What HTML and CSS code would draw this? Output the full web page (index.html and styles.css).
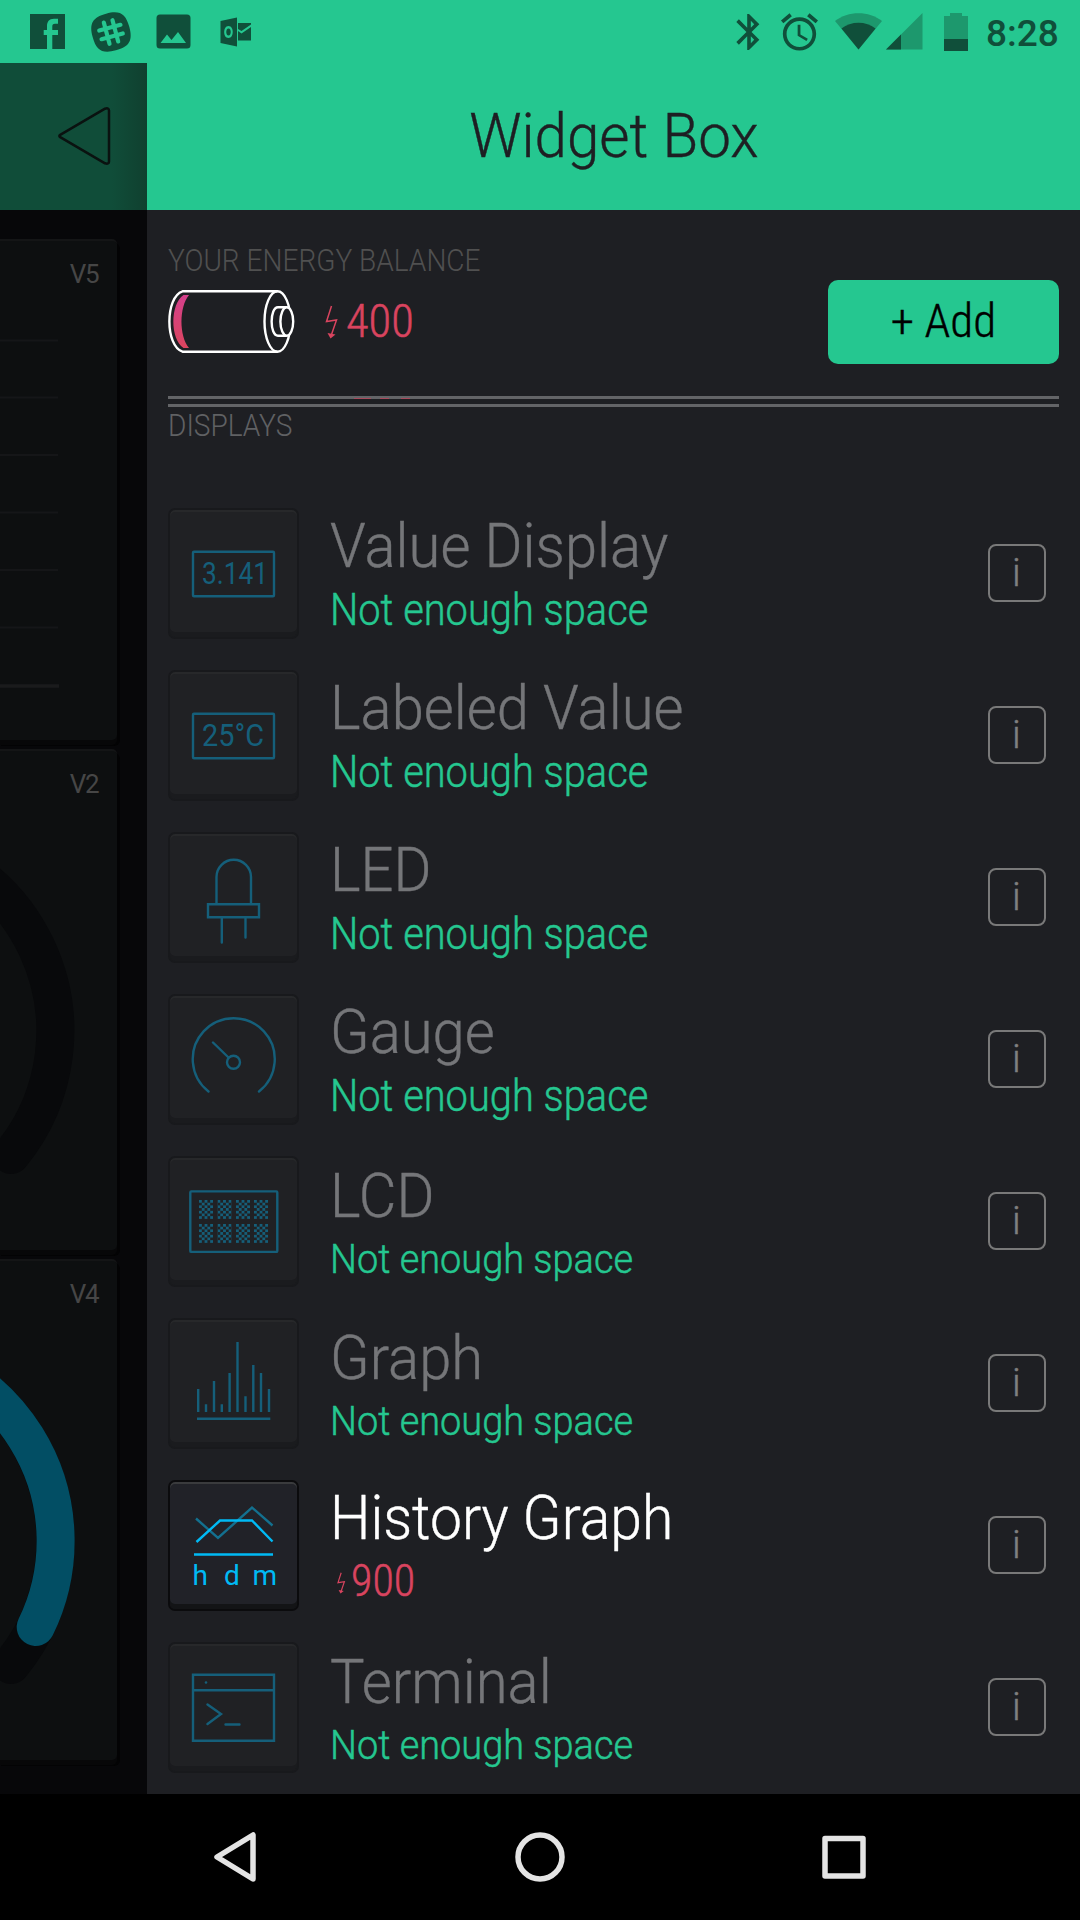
FILE: index.html
```html
<!DOCTYPE html>
<html lang="en">
<head>
<meta charset="utf-8">
<title>Widget Box</title>
<link rel="stylesheet" href="styles.css">
</head>
<body>
<div class="screen">
  <header class="status">
    <div class="status-left">
      <svg width="35" height="35" viewBox="0 0 35 35"><path fill="currentColor" fill-rule="evenodd" d="M0 0H35V35H22.300V21H28V16H22.300V12.500C22.300 10.500 23 9.700 25 9.700H28V4.800H24C19 4.800 17 8 17 12V16H13.700V21H17V35H0Z"/></svg>
      <svg width="42" height="42" viewBox="0 0 42 42"><g transform="rotate(-15 21 21)"><path fill="currentColor" d="M21 2C35 2 40 7 40 21S35 40 21 40 2 35 2 21 7 2 21 2Z"/><path class="cut" d="M16.500 10V32M25.500 10V32M10 16.500H32M10 25.500H32"/></g></svg>
      <svg width="35" height="35" viewBox="0 0 35 35"><path fill="currentColor" fill-rule="evenodd" d="M4 .5H31Q34.500 .5 34.500 4V31Q34.500 34.500 31 34.500H4Q.5 34.500 .5 31V4Q.5 .5 4 .5ZM4.500 29H30L22 18 15.500 26 11 20.500Z"/></svg>
      <svg width="32" height="30" viewBox="0 0 32 30"><path fill="currentColor" fill-rule="evenodd" d="M.5 4 17 .5V29.500L.5 26ZM8.500 9C2.800 9 2.800 21 8.500 21S14.200 9 8.500 9ZM8.500 11.500C11.500 11.500 11.500 18.500 8.500 18.500S5.500 11.500 8.500 11.500Z"/><path fill="currentColor" d="M18 6H31V7.500L21.500 14 18 12ZM18 14 21.500 16.500 31 10V23.500H18Z"/></svg>
    </div>
    <div class="status-right">
      <svg class="bt" width="24" height="38" viewBox="5.500 1.500 13 21"><path fill="currentColor" d="M17.710 7.710L12 2h-1v7.590L6.410 5 5 6.410 10.590 12 5 17.590 6.410 19 11 14.410V22h1l5.710-5.710-4.300-4.290 4.300-4.290zM13 5.830l1.880 1.880L13 9.590V5.830zm1.880 10.460L13 18.170v-3.760l1.880 1.880z"/></svg>
      <svg class="alarm" width="37" height="38" viewBox="2 1.700 20 20.500"><path fill="currentColor" d="M22 5.720l-4.600-3.860-1.290 1.530 4.600 3.860L22 5.720zM7.880 3.390L6.600 1.860 2 5.710l1.290 1.530 4.590-3.850zM12.500 8H11v6l4.750 2.850.75-1.230-4-2.370V8zM12 4c-4.970 0-9 4.030-9 9s4.020 9 9 9c4.970 0 9-4.030 9-9s-4.030-9-9-9zm0 16c-3.870 0-7-3.130-7-7s3.130-7 7-7 7 3.130 7 7-3.130 7-7 7z"/></svg>
      <svg class="wifi" width="47" height="37" viewBox="0 0 47 37"><path class="faint" d="M23.500 36.500 0 8C13-2.500 34-2.500 47 8Z"/><path fill="currentColor" d="M23.500 36.500 6.500 15.500C16 7.700 31 7.700 40.500 15.500Z"/></svg>
      <svg class="cell" width="37" height="37" viewBox="0 0 37 37"><path class="faint" d="M0 36.500H36.500V0Z"/><path fill="currentColor" d="M0 36.500H15V21.500Z"/></svg>
      <svg class="batt" width="24" height="38" viewBox="0 0 24 38"><path class="faint" d="M0 3H6V0H18V3H24V26H0Z"/><path fill="currentColor" d="M0 26H24V38H0Z"/></svg>
      <span class="clock">8:28</span>
    </div>
  </header>

  <main class="content">
    <aside class="project">
      <div class="project-bar">
        <svg width="54" height="60" viewBox="0 0 54 60"><path fill="none" stroke="#0a1210" stroke-width="2.500" stroke-linejoin="round" d="M3.200 28.800Q1.500 30 3.200 31.200L48 57.300Q52 58.500 52 55.500V4.500Q52 1.500 48 2.700Z"/></svg>
      </div>
      <div class="cards">
        <section class="card">
          <span class="pin">V5</span>
          <svg class="card-art" width="117" height="501" viewBox="0 0 117 501"><path stroke="#151618" stroke-width="2" d="M0 101.500H58M0 158.500H58M0 216H58M0 273.500H58M0 331H58M0 388.500H58"/><path stroke="#1a1b1c" stroke-width="3.500" d="M0 447H59"/></svg>
        </section>
        <section class="card">
          <span class="pin">V2</span>
          <svg class="card-art" width="117" height="501" viewBox="0 0 117 501"><path class="dial" d="M-139.600 86.400A195.600 195.600 0 0 1 11 406"/></svg>
        </section>
        <section class="card">
          <span class="pin">V4</span>
          <svg class="card-art" width="117" height="501" viewBox="0 0 117 501"><path class="dial" d="M-139.600 86.400A195.600 195.600 0 0 1 11 406"/><path class="dial dial-on" d="M-139.600 86.400A195.600 195.600 0 0 1 35.700 368"/></svg>
        </section>
      </div>
    </aside>

    <section class="drawer">
      <h1 class="title"><span>Widget Box</span></h1>
      <div class="drawer-body">
        <div class="label energy-label">YOUR ENERGY BALANCE</div>
        <div class="energy">
          <svg class="battery" width="127" height="63" viewBox="0 0 127 63">
            <defs><linearGradient id="charge" x1="0" y1="0" x2="0" y2="1"><stop offset="0" stop-color="#d4408c"/><stop offset="1" stop-color="#dc455e"/></linearGradient></defs>
            <path fill="url(#charge)" d="M21 5H15.500C2 14 2 49 15.500 58H21C11 46 11 17 21 5Z"/>
            <g fill="none" stroke="#fff" stroke-width="2.400"><path d="M109.500 1.300H14.500C-3 7-3 56 14.500 61.700H109.500"/><ellipse cx="109.500" cy="31.500" rx="13" ry="30.200"/><path fill="#1e1f23" d="M118.500 17.300H110C101.500 17.300 101.500 45.700 110 45.700H118.500"/><ellipse fill="#1e1f23" cx="118.800" cy="31.500" rx="6.400" ry="14.200"/></g>
          </svg>
          <svg class="bolt" width="14" height="34" viewBox="0 0 14 34"><path fill="none" stroke="currentColor" stroke-width="1.500" d="M6.500 1 1.500 16.500 11.500 15 6 31"/><path fill="currentColor" d="M2.500 28 5.500 33.500 10.500 29.500Z"/></svg>
          <span class="balance">400</span>
          <button class="add" type="button">+ Add</button>
        </div>
        <div class="rules"><i class="peek peek-a"></i><i class="peek peek-b"></i><i class="peek peek-c"></i></div>
        <div class="label section-label">DISPLAYS</div>

        <ul class="list">
          <li class="row">
            <div class="tile"><svg viewBox="0 0 130 130"><rect x="25" y="43.800" width="81" height="44.500" rx="1"/><text x="34" y="75.500" textLength="66" lengthAdjust="spacingAndGlyphs">3.141</text></svg></div>
            <div class="text"><div class="name">Value Display</div><div class="note">Not enough space</div></div>
            <div class="info">i</div>
          </li>
          <li class="row">
            <div class="tile"><svg viewBox="0 0 130 130"><rect x="25" y="43.800" width="81" height="44.500" rx="1"/><text x="34" y="75.500" textLength="62" lengthAdjust="spacingAndGlyphs">25°C</text></svg></div>
            <div class="text"><div class="name">Labeled Value</div><div class="note">Not enough space</div></div>
            <div class="info">i</div>
          </li>
          <li class="row">
            <div class="tile"><svg viewBox="0 0 130 130"><path d="M48.500 72V45A17.250 17.250 0 0 1 83 45V72M40 72.300H91V85.300H40ZM53.800 85.500V110.500M77.500 85.500V105.500"/></svg></div>
            <div class="text"><div class="name">LED</div><div class="note">Not enough space</div></div>
            <div class="info">i</div>
          </li>
          <li class="row">
            <div class="tile"><svg viewBox="0 0 130 130"><path d="M40.500 97.500A41 41 0 1 1 91 97.500M45 48.500 60.500 63.500"/><circle cx="65.500" cy="68.300" r="6.500"/></svg></div>
            <div class="text"><div class="name">Gauge</div><div class="note">Not enough space</div></div>
            <div class="info">i</div>
          </li>
          <li class="row odd">
            <div class="tile"><svg viewBox="0 0 130 130">
              <defs><pattern id="dots" width="5.600" height="5.400" patternUnits="userSpaceOnUse"><path class="solid" d="M0 0H2.800V2.700H0ZM2.800 2.700H5.600V5.400H2.800Z"/></pattern><rect id="cell" class="dots" width="14" height="18.900"/></defs>
              <rect x="22.300" y="35.400" width="87" height="60.500" rx="1"/>
              <use href="#cell" x="31" y="44"/><use href="#cell" x="49.500" y="44"/><use href="#cell" x="68" y="44"/><use href="#cell" x="86" y="44"/>
              <use href="#cell" x="31" y="68"/><use href="#cell" x="49.500" y="68"/><use href="#cell" x="68" y="68"/><use href="#cell" x="86" y="68"/>
            </svg></div>
            <div class="text"><div class="name">LCD</div><div class="note">Not enough space</div></div>
            <div class="info">i</div>
          </li>
          <li class="row odd">
            <div class="tile"><svg viewBox="0 0 130 130"><path class="butt" d="M30.200 94V71M38 94V86.300M46 94V63M53.800 94V86.300M61.600 94V55M69.500 94V24M77.500 94V78.300M85.300 94V47M93 94V55M101 94V71M29 100.800H102.300"/></svg></div>
            <div class="text"><div class="name">Graph</div><div class="note">Not enough space</div></div>
            <div class="info">i</div>
          </li>
          <li class="row active">
            <div class="tile"><svg viewBox="0 0 130 130"><path stroke="#13708f" d="M28 38.500 50 58 84 27.500 104.500 45.500"/><path d="M28.500 62 52 40.500H84L104.500 61.500M26 74.500H105"/><text class="units" x="24.500 56 84.500" y="105">hdm</text></svg></div>
            <div class="text"><div class="name">History Graph</div><div class="price"><svg width="9" height="22" viewBox="0 0 14 34"><path fill="none" stroke="currentColor" stroke-width="1.800" d="M6.500 1 1.500 16.500 11.500 15 6 31"/><path fill="currentColor" d="M2.500 28 5.500 33.500 10.500 29.500Z"/></svg><span>900</span></div></div>
            <div class="info">i</div>
          </li>
          <li class="row odd">
            <div class="tile"><svg viewBox="0 0 130 130"><path d="M25 32.700H106V98.800H25ZM25 48.300H106M39.500 62.500 53 72 39.500 82M57.500 82.500H71.500"/><circle class="solid" cx="38" cy="40.500" r="1.300"/></svg></div>
            <div class="text"><div class="name">Terminal</div><div class="note">Not enough space</div></div>
            <div class="info">i</div>
          </li>
        </ul>
      </div>
    </section>
  </main>

  <nav class="nav">
    <svg width="50" height="56" viewBox="0 0 50 56"><path d="M6 28 42 6V50Z"/></svg>
    <svg width="56" height="56" viewBox="0 0 56 56"><circle cx="28" cy="28" r="22"/></svg>
    <svg width="50" height="56" viewBox="0 0 50 56"><rect x="6" y="9.500" width="38" height="37.500"/></svg>
  </nav>
</div>
</body>
</html>
```

FILE: styles.css
```css
* { box-sizing: border-box; }
body { margin: 0; background: #000; font-family: Roboto, "Liberation Sans", sans-serif; font-weight: 300; }
svg { display: block; flex: none; overflow: visible; }
.screen { width: 1080px; height: 1920px; display: flex; flex-direction: column; overflow: hidden; }

/* Status bar */
.status { height: 63px; background: #25c790; color: #104f3a; display: flex; justify-content: space-between; align-items: center; padding: 0 21px 0 30px; }
.status-left, .status-right { display: flex; align-items: center; }
.status-left svg:nth-child(2) { margin-left: 25px; }
.status-left svg:nth-child(3) { margin-left: 24px; }
.status-left svg:nth-child(4) { margin-left: 29px; }
.cut { fill: none; stroke: #25c790; stroke-width: 4.2; stroke-linecap: round; }
.faint { fill: #1d986d; }
.alarm { margin-left: 20px; }
.wifi { margin-left: 17px; }
.cell { margin-left: 4px; }
.batt { margin-left: 21px; }
.clock { margin-left: 18px; font-size: 37px; font-weight: 500; line-height: 63px; padding-top: 3px; width: 73px; white-space: nowrap; }

.content { height: 1731px; display: flex; }

/* Project screen left visible beside the drawer */
.project { width: 147px; background: #070709; overflow: hidden; }
.project-bar { height: 147px; padding: 43px 0 0 57px; background: linear-gradient(90deg, #104d39 0 112px, #10402f 147px); }
.cards { padding-top: 29px; display: flex; flex-direction: column; gap: 9px; }
.card { position: relative; width: 117px; height: 501px; background: #0d0f10; border-top: 2px solid #141516; border-radius: 0 5px 5px 0; box-shadow: 0 5px 0 #070708, 2px 5px 0 1px #030304; }
.pin { display: block; padding: 18px 19px 0 0; text-align: right; font-size: 26px; font-weight: 400; line-height: 30px; letter-spacing: -1.5px; color: #464646; }
.card-art { position: absolute; left: 0; top: -2px; overflow: hidden; }
.dial { fill: none; stroke: #08090b; stroke-width: 38; stroke-linecap: round; }
.dial-on { stroke: #024e64; }

/* Drawer */
.drawer { width: 933px; background: #1e1f23; }
.title { margin: 0; height: 147px; line-height: 145px; background: #25c790; color: #1e1f23; font-size: 62px; font-weight: 300; text-align: center; }
.title span { display: inline-block; transform: scaleX(.94); -webkit-text-stroke: .4px currentColor; }
.drawer-body { padding: 35px 21px 0; }
.label { font-size: 30.5px; line-height: 31px; height: 31px; white-space: nowrap; transform: scaleX(.92); transform-origin: left; }
.energy-label { color: #505050; }
.energy { height: 84px; margin-top: 4px; display: flex; align-items: center; color: #d9445f; }
.battery { margin-top: -1px; }
.bolt { margin-left: 30px; }
.balance { margin-left: 7px; margin-top: -2px; font-size: 46.5px; font-stretch: 75%; -webkit-text-stroke: .5px currentColor; }
.add { margin-left: auto; width: 231px; height: 84px; border: 0; border-radius: 10px; background: #25c790; color: #000; font: inherit; font-size: 47px; font-stretch: 75%; padding: 0 0 4px; -webkit-text-stroke: .4px currentColor; }
.rules { position: relative; height: 11px; margin-top: 32px; border: solid #636467; border-width: 3px 0; }
.peek { position: absolute; top: -1px; height: 1px; background: #a84a5c; }
.peek-a { left: 186px; width: 17px; }
.peek-b { left: 212px; width: 9px; }
.peek-c { left: 233px; width: 9px; }
.section-label { margin-top: 3px; color: #606163; }

.list { list-style: none; margin: 0; padding: 67px 0 0; }
.row { height: 162px; display: flex; }
.tile { width: 131px; height: 131px; flex: none; position: relative; border: 2px solid #18191c; border-radius: 7px; background: #202124; box-shadow: inset 0 2px 0 #27282a, inset 0 -5px 0 #1a1b1e; }
.tile svg { position: absolute; left: -2px; top: -2px; width: 130px; height: 130px; fill: none; stroke: #155f7a; stroke-width: 2.4; stroke-linecap: round; }
.tile text { stroke: none; fill: #155f7a; font-size: 31px; font-weight: 400; }
.tile .solid { fill: #155f7a; stroke: none; }
.tile .dots { fill: url(#dots); stroke: none; }
.tile .butt { stroke-linecap: butt; }
.text { margin-left: 31px; padding-top: 7px; width: 500px; white-space: nowrap; }
.odd .text { padding-top: 9px; }
.name { font-size: 62px; line-height: 62px; color: #757679; transform: scaleX(.935); transform-origin: left; -webkit-text-stroke: .4px currentColor; }
.note { margin-top: 8px; font-size: 45px; line-height: 50px; color: #25c790; transform: scaleX(.885); transform-origin: left; -webkit-text-stroke: .5px currentColor; }
.odd .note { margin-top: 7px; font-size: 41px; transform: scaleX(.925); }
.info { width: 58px; height: 58px; margin: 36px 13px 0 auto; padding-right: 1px; border: 2.5px solid #797979; border-radius: 8px; color: #808080; font-size: 39px; font-weight: 300; line-height: 54px; text-align: center; -webkit-text-stroke: .4px currentColor; }

.active .tile { background: #212228; border-color: #0b0b0d; box-shadow: inset 0 2px 0 #3a3b3d, inset 0 -5px 0 #131416; }
.active .tile svg { stroke: #00baf5; stroke-linecap: butt; }
.active .tile .units { fill: #00baf5; font-size: 28px; }
.active .name { color: #fff; transform: scaleX(.92); }
.price { display: flex; align-items: center; height: 50px; margin-top: 7px; padding-left: 7px; color: #d9445f; font-size: 44px; font-stretch: 75%; -webkit-text-stroke: .5px currentColor; }
.price svg { margin-top: 3px; }
.price span { margin-left: 5px; }

/* System navigation */
.nav { height: 126px; background: #000; display: flex; justify-content: space-between; align-items: center; padding: 0 211px; }
.nav svg { fill: none; stroke: #e4e4e4; stroke-width: 5.5; stroke-linejoin: round; }
```
